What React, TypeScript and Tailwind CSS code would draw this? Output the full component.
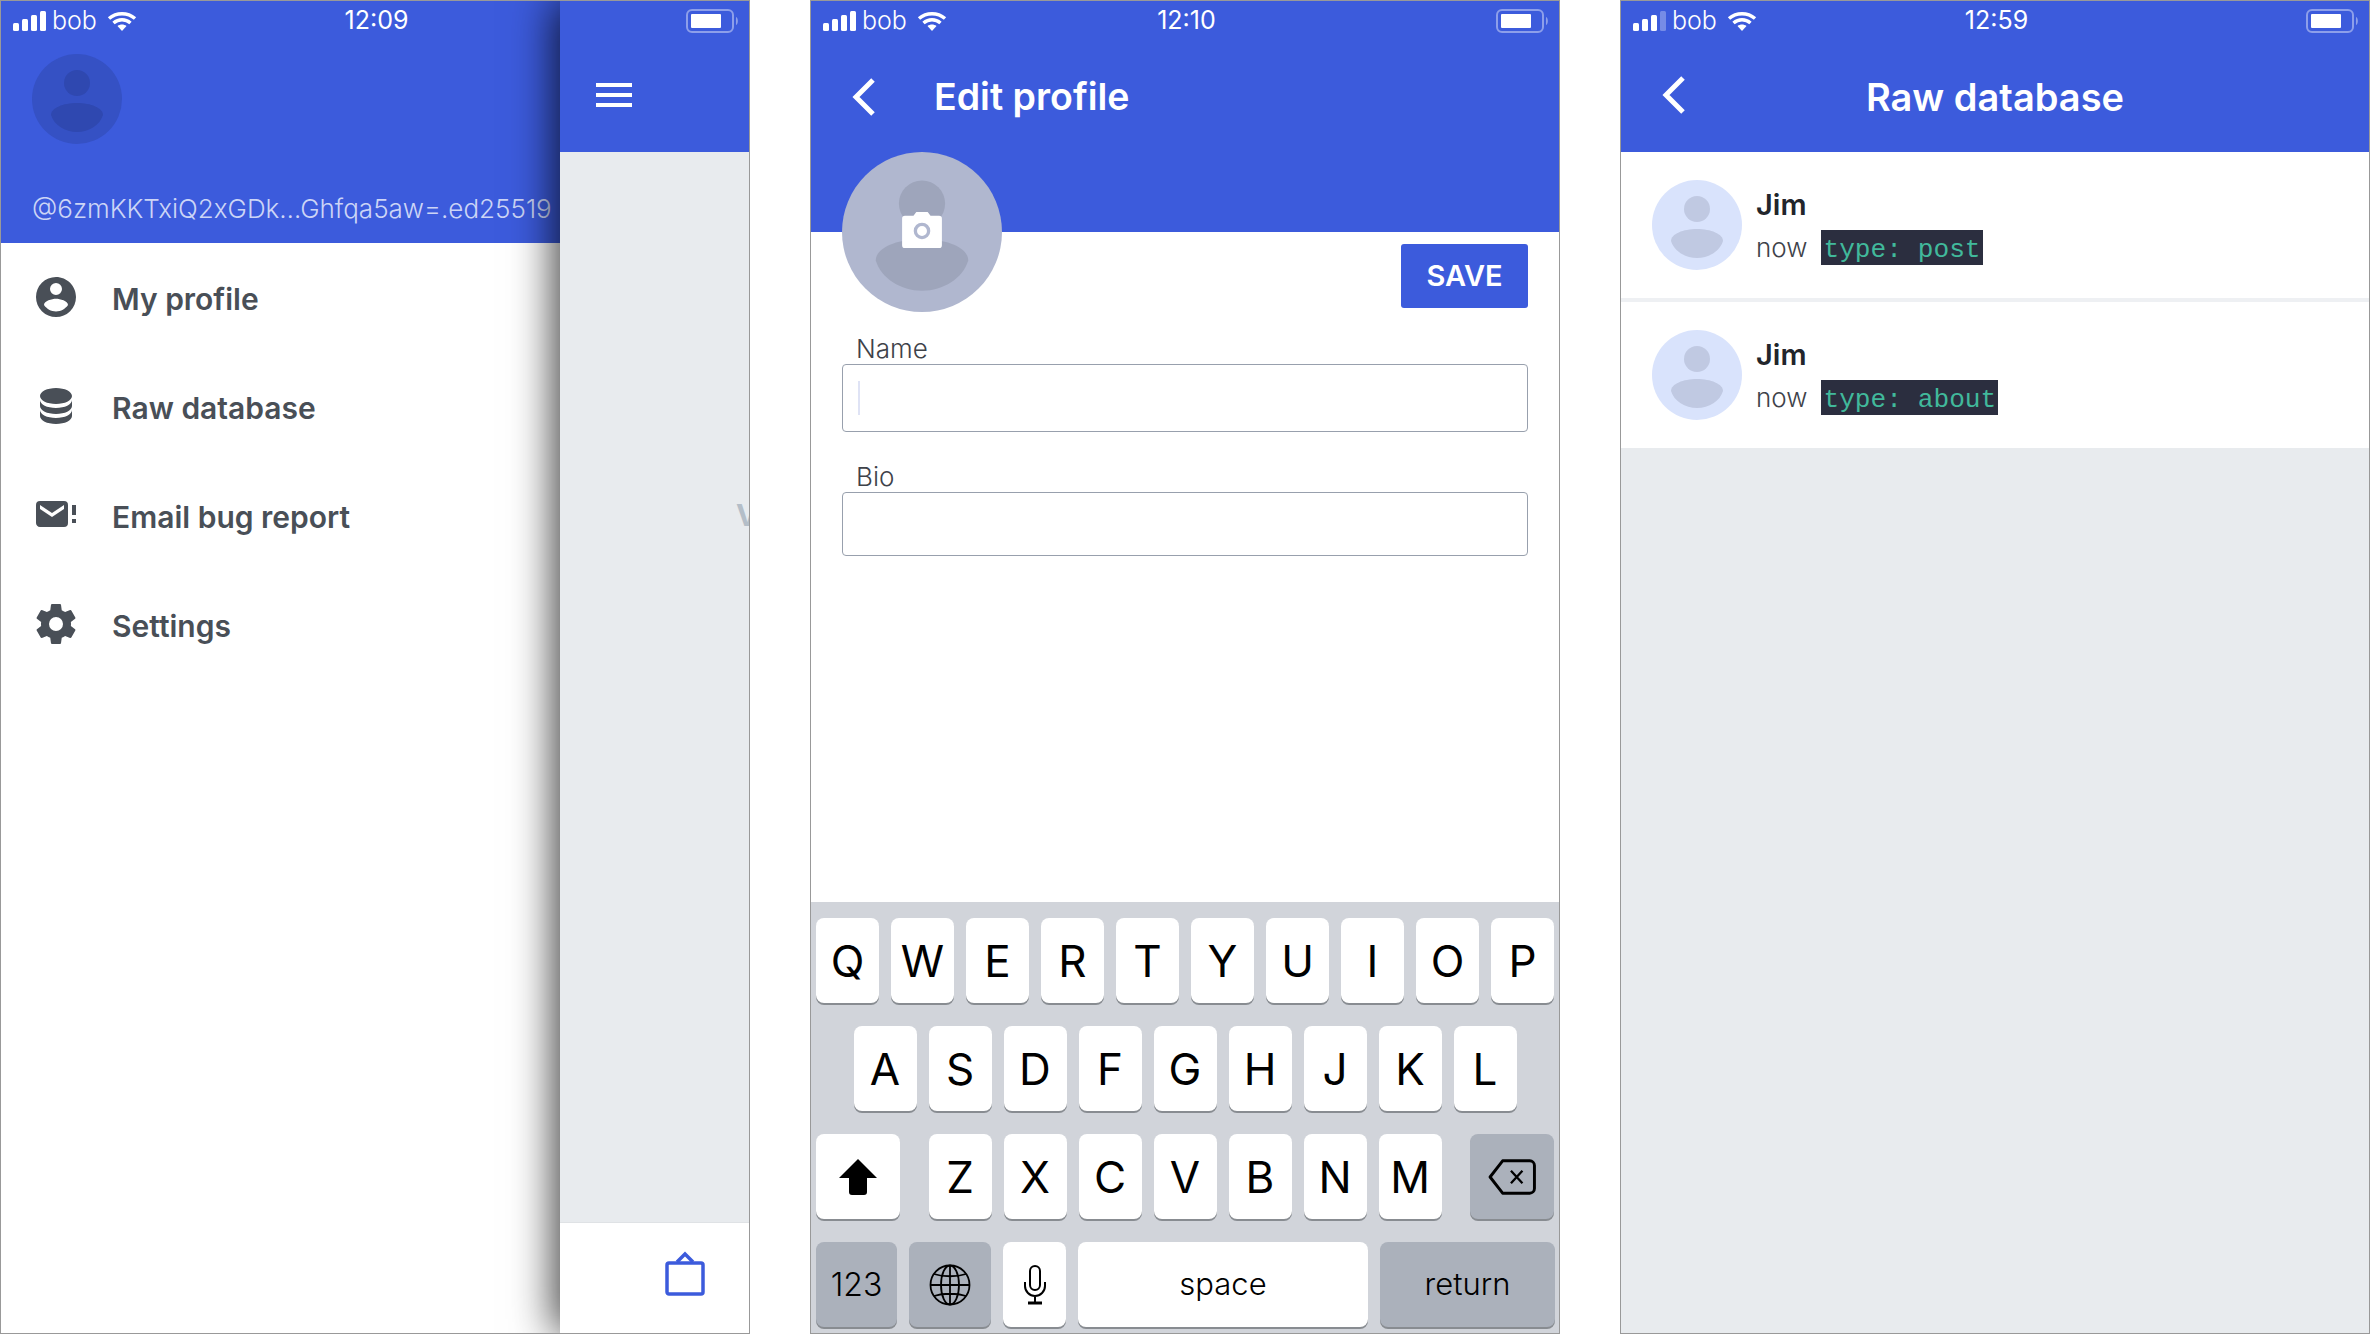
const BLUE = "bg-[#3c5bdc]";

function Signal({ dim }: { dim?: boolean }) {
  return (
    <svg width="34" height="20" viewBox="0 0 34 20" fill="#fff">
      <rect x="0" y="12" width="6" height="8" rx="1.5" />
      <rect x="9" y="8" width="6" height="12" rx="1.5" />
      <rect x="18" y="4" width="6" height="16" rx="1.5" />
      <rect x="27" y="0" width="6" height="20" rx="1.5" opacity={dim ? 0.3 : 1} />
    </svg>
  );
}

function Wifi() {
  return (
    <svg width="30" height="20" viewBox="0 0 30 20" fill="none" stroke="#fff" strokeWidth="3.5">
      <path d="M2 7.500c7.500-6.500 18.500-6.500 26 0" />
      <path d="M6.500 12c5-4.200 12-4.200 17 0" />
      <path d="M15 20l-4.500-5c2.700-2 6.300-2 9 0z" fill="#fff" stroke="none" />
    </svg>
  );
}

function Battery() {
  return (
    <svg width="54" height="24" viewBox="0 0 54 24" fill="none">
      <rect x="1" y="1" width="46" height="22" rx="5" stroke="#8d9fea" strokeWidth="2" />
      <rect x="5" y="5" width="30" height="14" rx="1" fill="#fff" />
      <path d="M50 8c2.500 1 2.500 7 0 8z" fill="#8d9fea" />
    </svg>
  );
}

function StatusBar({ time, dim }: { time: string; dim?: boolean }) {
  return (
    <div className="w-[748px] h-10 grid grid-cols-3 items-center pl-3 pr-[9px] text-white text-[25px] font-['Inter',sans-serif]">
      <div className="flex items-center gap-[5px]">
        <Signal dim={dim} />
        <span className="font-light">bob</span>
        <span className="ml-[5px] flex">
          <Wifi />
        </span>
      </div>
      <div className="text-center">{time}</div>
      <div className="flex justify-end">
        <Battery />
      </div>
    </div>
  );
}

function BackIcon() {
  return (
    <svg width="24" height="38" viewBox="0 0 24 38" fill="none" stroke="#fff" strokeWidth="5">
      <path d="M21 2L4 19l17 17" />
    </svg>
  );
}

function Person({ bg, fg, size }: { bg: string; fg: string; size: number }) {
  return (
    <svg width={size} height={size} viewBox="0 0 90 90" className="block">
      <circle cx="45" cy="45" r="45" fill={bg} />
      <ellipse cx="45" cy="29" rx="13" ry="13" fill={fg} />
      <path d="M19 61c0-7 12-12 26-12s26 5 26 12c-3 10-14 17-26 17s-23-7-26-17z" fill={fg} />
    </svg>
  );
}

const MENU = [
  {
    label: "My profile",
    icon: "M12,19.2C9.5,19.2 7.29,17.92 6,16C6.03,14 10,12.9 12,12.9C14,12.9 17.97,14 18,16C16.71,17.92 14.5,19.2 12,19.2M12,5A3,3 0 0,1 15,8A3,3 0 0,1 12,11A3,3 0 0,1 9,8A3,3 0 0,1 12,5M12,2A10,10 0 0,0 2,12A10,10 0 0,0 12,22A10,10 0 0,0 22,12C22,6.47 17.5,2 12,2Z",
  },
  {
    label: "Raw database",
    icon: "M12,3C7.58,3 4,4.79 4,7C4,9.21 7.58,11 12,11C16.42,11 20,9.21 20,7C20,4.79 16.42,3 12,3M4,9V12C4,14.21 7.58,16 12,16C16.42,16 20,14.21 20,12V9C20,11.21 16.42,13 12,13C7.58,13 4,11.21 4,9M4,14V17C4,19.21 7.58,21 12,21C16.42,21 20,19.21 20,17V14C20,16.21 16.42,18 12,18C7.58,18 4,16.21 4,14Z",
  },
  {
    label: "Email bug report",
    icon: "M16,9V7L10,11L4,7V9L10,13L16,9M16,5A2,2 0 0,1 18,7V16A2,2 0 0,1 16,18H4C2.89,18 2,17.1 2,16V7A2,2 0 0,1 4,5H16M20,12V7H22V12H20M20,16V14H22V16H20Z",
  },
  {
    label: "Settings",
    icon: "M12,15.5A3.5,3.5 0 0,1 8.5,12A3.5,3.5 0 0,1 12,8.5A3.5,3.5 0 0,1 15.5,12A3.5,3.5 0 0,1 12,15.5M19.43,12.97C19.47,12.65 19.5,12.33 19.5,12C19.5,11.67 19.47,11.34 19.43,11L21.54,9.37C21.73,9.22 21.78,8.95 21.66,8.73L19.66,5.27C19.54,5.05 19.27,4.96 19.05,5.05L16.56,6.05C16.04,5.66 15.5,5.32 14.87,5.07L14.5,2.42C14.46,2.18 14.25,2 14,2H10C9.75,2 9.54,2.18 9.5,2.42L9.13,5.07C8.5,5.32 7.96,5.66 7.44,6.05L4.95,5.05C4.73,4.96 4.46,5.05 4.34,5.27L2.34,8.73C2.21,8.95 2.27,9.22 2.46,9.37L4.57,11C4.53,11.34 4.5,11.67 4.5,12C4.5,12.33 4.53,12.65 4.57,12.97L2.46,14.63C2.27,14.78 2.21,15.05 2.34,15.27L4.34,18.73C4.46,18.95 4.73,19.03 4.95,18.95L7.44,17.94C7.96,18.34 8.5,18.68 9.13,18.93L9.5,21.58C9.54,21.82 9.75,22 10,22H14C14.25,22 14.46,21.82 14.5,21.58L14.87,18.93C15.5,18.67 16.04,18.34 16.56,17.94L19.05,18.95C19.27,19.03 19.54,18.95 19.66,18.73L21.66,15.27C21.78,15.05 21.73,14.78 21.54,14.63L19.43,12.97Z",
  },
];

function DrawerScreen() {
  return (
    <div className="relative w-[750px] h-full border border-[#999] overflow-hidden flex bg-white font-['Inter',sans-serif]">
      <div className="w-[559px] shrink-0 flex flex-col">
        <div className={`${BLUE} h-[242px] flex flex-col`}>
          <StatusBar time="12:09" />
          <div className="pl-[31px] pt-[13px]">
            <Person bg="#3551c4" fg="#2f48b0" size={90} />
          </div>
          <div className="pl-[31px] pt-[49px] text-[26px] leading-8 text-[#ccd5f6] font-light whitespace-nowrap">
            @6zmKKTxiQ2xGDk…Ghfqa5aw=.ed25519
          </div>
        </div>
        <div className="flex flex-col pt-[2px]">
          {MENU.map((item) => (
            <div key={item.label} className="h-[109px] flex items-center pl-[35px] gap-[36px]">
              <svg width="40" height="40" viewBox="2 2 20 20" fill="#494f57" className="-mt-[5px]">
                <path d={item.icon} />
              </svg>
              <span className="text-[30px] font-semibold text-[#494f57]">{item.label}</span>
            </div>
          ))}
        </div>
      </div>
      <div className="relative flex-1 flex flex-col bg-[#e8ebee] shadow-[-6px_0_40px_rgba(0,0,0,0.75)]">
        <div className={`${BLUE} h-[151px] flex flex-col`}>
          <div className="h-10 flex items-center justify-end pr-[9px]">
            <Battery />
          </div>
          <div className="pl-[36px] pt-[42px]">
            <div className="w-[36px] flex flex-col gap-[6px]">
              <div className="h-[4px] bg-white" />
              <div className="h-[4px] bg-white" />
              <div className="h-[4px] bg-white" />
            </div>
          </div>
        </div>
        <div className="flex-1" />
        <div className="h-[111px] bg-white border-t border-[#dfe2e5] flex justify-end pr-[44px] pt-[28px]">
          <svg width="40" height="45" viewBox="0 0 40 45" fill="none" stroke="#3c5bdc" strokeWidth="3.5">
            <rect x="2" y="12" width="36" height="31" rx="2" />
            <path d="M12 11l8-8l8 8" />
          </svg>
        </div>
        <span className="absolute left-[176px] top-[492px] text-[#b4bec8] text-[30px] font-bold">V</span>
      </div>
    </div>
  );
}

function Key({ children, w = "w-[63px]", dark }: { children: React.ReactNode; w?: string; dark?: boolean }) {
  return (
    <div
      className={`${w} h-[85px] shrink-0 rounded-[8px] flex items-center justify-center text-black shadow-[0_2px_0_#888c91] ${
        dark ? "bg-[#abb1bb]" : "bg-white"
      }`}
    >
      {children}
    </div>
  );
}

function KeyRow({ keys }: { keys: string }) {
  return (
    <>
      {keys.split("").map((k) => (
        <Key key={k}>
          <span className="text-[44px] font-normal">{k}</span>
        </Key>
      ))}
    </>
  );
}

function Keyboard() {
  return (
    <div className="h-[431px] bg-[#d1d4da] pt-[16px] px-[5px] flex flex-col gap-[23px] font-['Inter',sans-serif]">
      <div className="flex justify-center gap-[12px]">
        <KeyRow keys="QWERTYUIOP" />
      </div>
      <div className="flex justify-center gap-[12px]">
        <KeyRow keys="ASDFGHJKL" />
      </div>
      <div className="flex justify-between">
        <Key w="w-[84px]">
          <svg width="38" height="36" viewBox="0 0 38 36" fill="#000">
            <path d="M19 0L38 19H28V33a3 3 0 0 1-3 3H13a3 3 0 0 1-3-3V19H0z" />
          </svg>
        </Key>
        <div className="flex gap-[12px]">
          <KeyRow keys="ZXCVBNM" />
        </div>
        <Key w="w-[84px]" dark>
          <svg width="48" height="36" viewBox="0 0 46 34" fill="none" stroke="#000" strokeWidth="2.8">
            <path d="M14 1.500h26a4.500 4.500 0 0 1 4.500 4.500v22a4.500 4.500 0 0 1-4.500 4.500H14L2 17z" strokeLinejoin="round" />
            <path d="M22 11l11 12M33 11L22 23" strokeWidth="2.2" />
          </svg>
        </Key>
      </div>
      <div className="flex gap-[12px]">
        <Key w="w-[81px]" dark>
          <span className="text-[32px] font-light">123</span>
        </Key>
        <Key w="w-[82px]" dark>
          <svg width="42" height="42" viewBox="0 0 42 42" fill="none" stroke="#000" strokeWidth="1.8">
            <circle cx="21" cy="21" r="19.5" />
            <ellipse cx="21" cy="21" rx="9" ry="19.5" />
            <path d="M21 1.500v39M1.500 21h39M5 10c9 3 23 3 32 0M5 32c9-3 23-3 32 0" />
          </svg>
        </Key>
        <Key dark={false}>
          <svg width="24" height="40" viewBox="0 0 24 40" fill="none" stroke="#000" strokeWidth="2">
            <rect x="7" y="1" width="10" height="24" rx="5" />
            <path d="M2 17v4a10 10 0 0 0 20 0v-4M12 31v6" />
            <path d="M5 38h14" strokeWidth="3" />
          </svg>
        </Key>
        <Key w="w-[290px]">
          <span className="text-[31px] font-light">space</span>
        </Key>
        <Key w="w-[175px]" dark>
          <span className="text-[31px] font-light">return</span>
        </Key>
      </div>
    </div>
  );
}

function EditProfileScreen() {
  return (
    <div className="w-[750px] h-full border border-[#999] overflow-hidden flex flex-col bg-white font-['Inter',sans-serif]">
      <div className={`${BLUE} h-[231px] shrink-0`}>
        <StatusBar time="12:10" />
        <div className="flex items-center pl-[41px] pt-[34px] gap-[58px]">
          <BackIcon />
          <span className="text-white text-[37.5px] font-semibold leading-[44px]">Edit profile</span>
        </div>
      </div>
      <div className="flex-1 relative px-[31px] flex flex-col">
        <div className="absolute left-[31px] -top-[80px] w-[160px] h-[160px]">
          <Person bg="#b0b7cf" fg="#9ea5bb" size={160} />
          <div className="absolute inset-0 flex items-center justify-center">
            <svg width="40" height="36" viewBox="0 0 42 38" className="-mt-[4px]">
              <path d="M12 4l3-4h12l3 4h9a3 3 0 0 1 3 3v28a3 3 0 0 1-3 3H3a3 3 0 0 1-3-3V7a3 3 0 0 1 3-3z" fill="#fff" />
              <circle cx="21" cy="20" r="7" fill="none" stroke="#b0b7cf" strokeWidth="3.5" />
            </svg>
          </div>
        </div>
        <div className="flex justify-end pt-[12px]">
          <div className={`${BLUE} w-[127px] h-[64px] rounded-[3px] flex items-center justify-center text-white text-[29px] font-semibold`}>
            SAVE
          </div>
        </div>
        <div className="pl-[14px] mt-[26px] h-[30px] text-[26px] leading-[30px] font-light text-[#3e4249]">Name</div>
        <div className="h-[68px] border border-[#98a0ad] rounded-[4px] flex items-center pl-[15px]">
          <div className="w-[2px] h-[34px] bg-[#dfe3f5]" />
        </div>
        <div className="pl-[14px] mt-[30px] h-[30px] text-[26px] leading-[30px] font-light text-[#3e4249]">Bio</div>
        <div className="h-[64px] border border-[#98a0ad] rounded-[4px]" />
      </div>
      <Keyboard />
    </div>
  );
}

function Row({ type }: { type: string }) {
  return (
    <div className="h-[146px] bg-white flex pl-[31px] pt-[28px] gap-[14px]">
      <Person bg="#d9e3fc" fg="#c0c9e2" size={90} />
      <div className="flex flex-col">
        <div className="text-[29px] leading-[34px] pt-[8px] font-semibold text-[#22252b]">Jim</div>
        <div className="flex items-center gap-[14px] mt-[8px] h-[35px]">
          <span className="text-[26px] font-light text-[#3e4249]">now</span>
          <span className="h-[35px] px-[2px] pt-[4px] bg-[#2b2e3f] text-[#41b99b] text-[26.2px] leading-[32px] font-['Liberation_Mono',monospace] whitespace-pre">
            {type}
          </span>
        </div>
      </div>
    </div>
  );
}

function RawDatabaseScreen() {
  return (
    <div className="w-[750px] h-full border border-[#999] overflow-hidden flex flex-col bg-[#e8ebee] font-['Inter',sans-serif]">
      <div className={`${BLUE} h-[151px] shrink-0`}>
        <StatusBar time="12:59" dim />
        <div className="relative flex items-center justify-center pt-[34px]">
          <span className="text-white text-[38px] font-semibold leading-[44px]">Raw database</span>
          <div className="absolute left-[41px] top-[35px]">
            <BackIcon />
          </div>
        </div>
      </div>
      <div className="flex flex-col gap-[4px] bg-[#eef0f3]">
        <Row type="type: post" />
        <Row type="type: about" />
      </div>
    </div>
  );
}

export default function App() {
  return (
    <div className="w-[2370px] h-[1334px] flex justify-between bg-white">
      <DrawerScreen />
      <EditProfileScreen />
      <RawDatabaseScreen />
    </div>
  );
}
